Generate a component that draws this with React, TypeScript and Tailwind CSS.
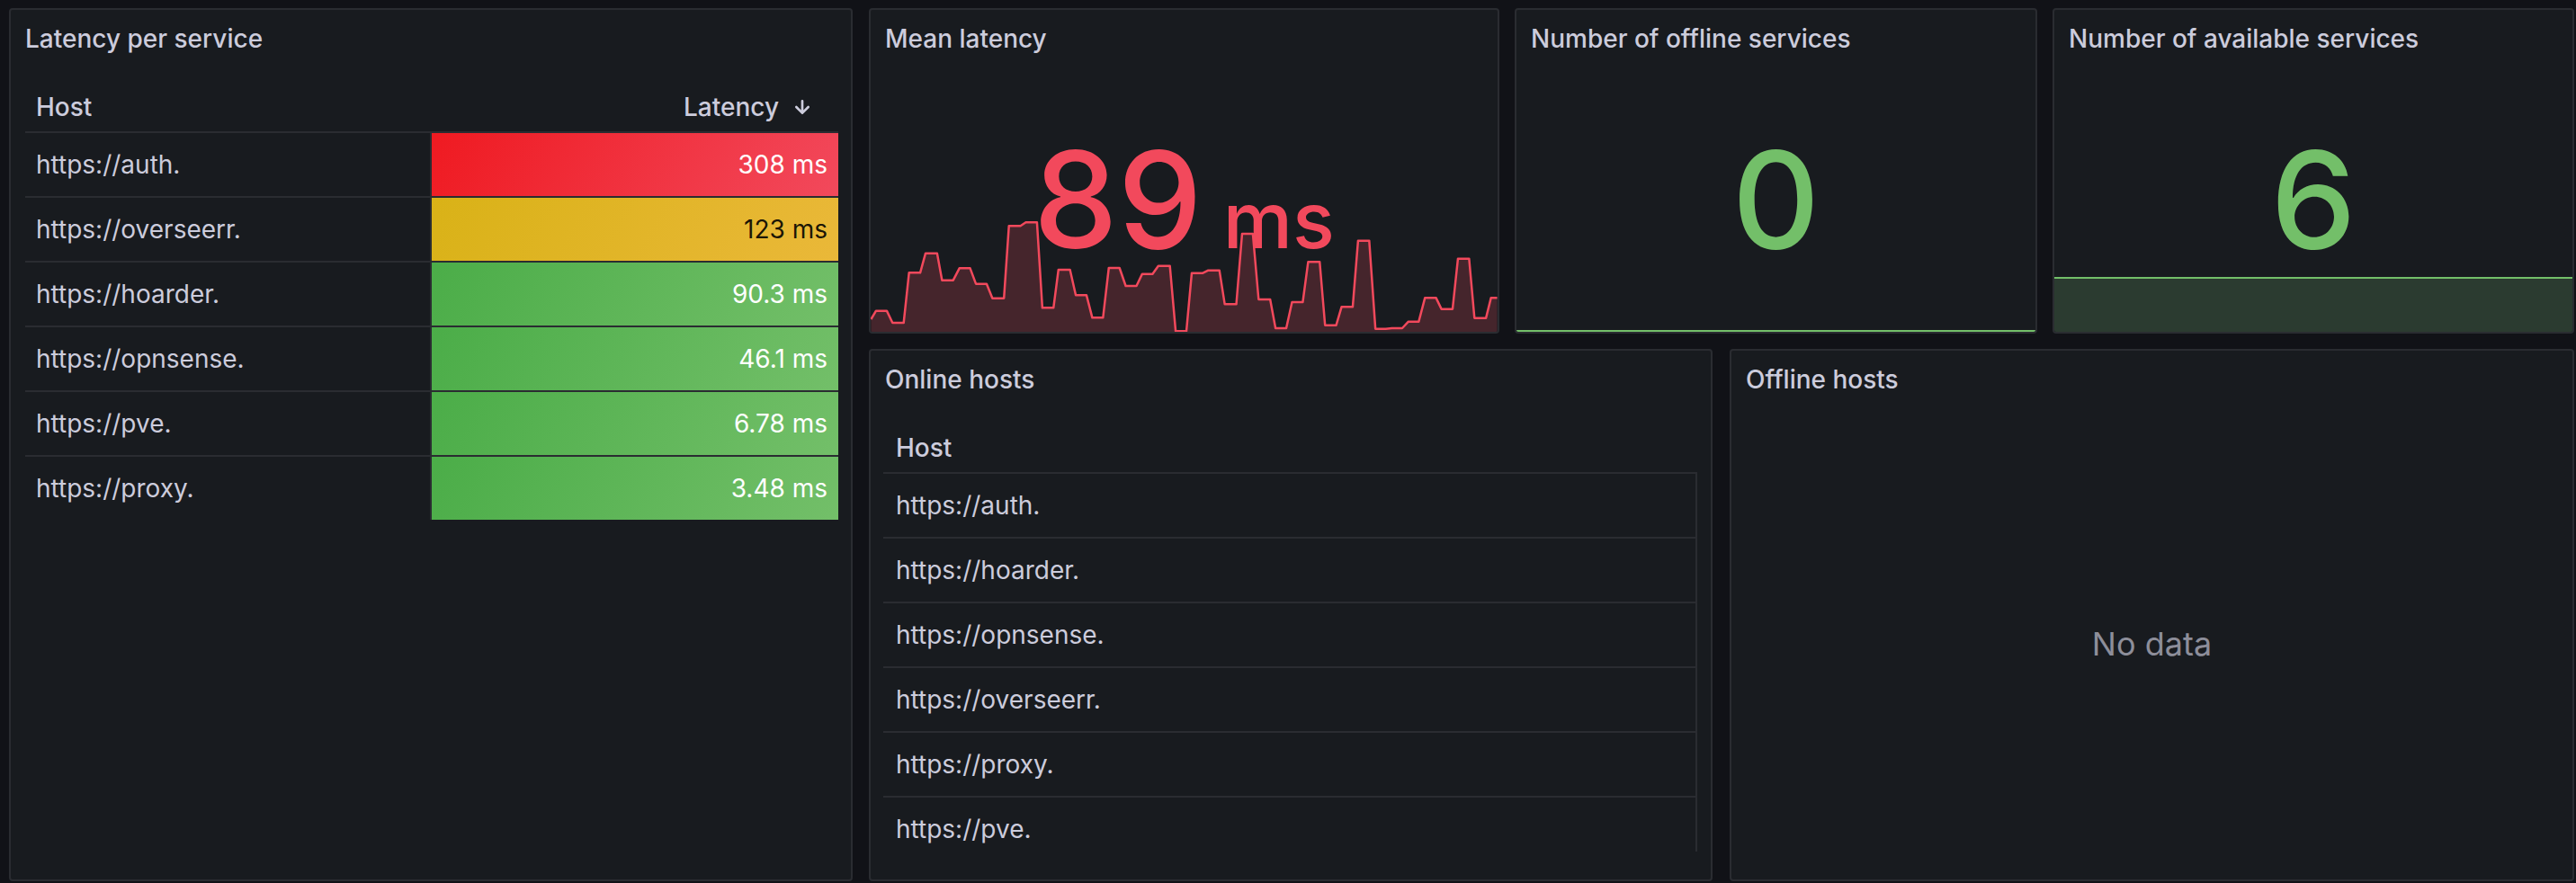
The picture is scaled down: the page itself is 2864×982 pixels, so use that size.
import React from "react";

const latencies = [
  { host: "https://auth.", value: "308 ms", cell: "bg-[linear-gradient(120deg,#ef1a21,#f2495c)] text-white" },
  { host: "https://overseerr.", value: "123 ms", cell: "bg-[linear-gradient(120deg,#d9b217,#eab839)] text-black/90" },
  { host: "https://hoarder.", value: "90.3 ms", cell: "bg-[linear-gradient(120deg,#4bad48,#73bf69)] text-white" },
  { host: "https://opnsense.", value: "46.1 ms", cell: "bg-[linear-gradient(120deg,#4bad48,#73bf69)] text-white" },
  { host: "https://pve.", value: "6.78 ms", cell: "bg-[linear-gradient(120deg,#4bad48,#73bf69)] text-white" },
  { host: "https://proxy.", value: "3.48 ms", cell: "bg-[linear-gradient(120deg,#4bad48,#73bf69)] text-white" },
];

const onlineHosts = [
  "https://auth.",
  "https://hoarder.",
  "https://opnsense.",
  "https://overseerr.",
  "https://proxy.",
  "https://pve.",
];

// mean latency series, traced from the panel (x, y in sparkline units)
const series =
  "18,1068 30,1040 56,1040 70,1080 97,1080 110,913 137,913 150,848 178,848 190,938 217,938 232,898 258,898 272,950 298,950 312,998 340,998 352,757 380,757 393,745 420,745 433,1030 460,1030 472,903 500,903 514,988 540,988 554,1063 580,1063 594,897 620,897 635,957 661,957 675,917 700,917 714,890 742,890 756,1108 782,1108 795,914 822,914 835,905 862,905 875,1018 903,1018 917,783 943,783 957,1002 985,1002 998,1098 1024,1098 1038,1011 1064,1011 1077,877 1105,877 1118,1088 1145,1088 1158,1027 1185,1027 1198,806 1225,806 1240,1100 1265,1100 1280,1098 1305,1098 1320,1076 1345,1076 1360,997 1387,997 1400,1034 1427,1034 1440,866 1467,866 1480,1064 1508,1064 1520,997 1535,997";

function Panel({ title, className = "", children }: { title: string; className?: string; children?: React.ReactNode }) {
  return (
    <div className={`relative flex flex-col overflow-hidden rounded-[4px] border-2 border-[#2a2c31] bg-[#181b1f] ${className}`}>
      <div className="relative z-10 flex h-[64px] shrink-0 items-center pl-[16px] text-[28px] font-medium text-[#ccccdc]">
        {title}
      </div>
      {children}
    </div>
  );
}

function SortDown() {
  return (
    <svg width="32" height="32" viewBox="0 0 24 24" fill="currentColor">
      <path d="M17.71,11.29a1,1,0,0,0-1.42,0L13,14.59V7a1,1,0,0,0-2,0v7.59l-3.29-3.3a1,1,0,0,0-1.420,1.42l5,5a1,1,0,0,0,.33.21.94.94,0,0,0,.76,0,1,1,0,0,0,.33-.21l5-5A1,1,0,0,0,17.71,11.29Z" />
    </svg>
  );
}

export default function App() {
  return (
    <div className="flex h-[982px] w-[2864px] gap-[18px] bg-[#111217] pt-[9px] pr-[2px] pb-[2px] pl-[10px] font-['Inter',sans-serif] text-[#ccccdc]">
      {/* Latency per service */}
      <Panel title="Latency per service" className="w-[938px] shrink-0">
        <div className="flex flex-col pr-[14px] pl-[16px] text-[28px]">
          <div className="flex h-[73px] border-b-2 border-[#2a2c31] pt-[23px] font-medium">
            <div className="flex h-[42px] w-[452px] items-center pl-[12px]">Host</div>
            <div className="flex h-[42px] flex-1 items-center justify-end gap-[10px] pr-[24px]">
              Latency
              <SortDown />
            </div>
          </div>
          {latencies.map((row, i) => (
            <div
              key={row.host}
              className={`flex ${i < latencies.length - 1 ? "h-[72px] border-b-2 border-[#2a2c31]" : "h-[70px]"}`}
            >
              <div className="flex w-[452px] items-center border-r-2 border-[#2a2c31] pl-[12px]">{row.host}</div>
              <div className={`flex flex-1 items-center justify-end pr-[12px] ${row.cell}`}>{row.value}</div>
            </div>
          ))}
        </div>
      </Panel>

      <div className="flex flex-1 flex-col gap-[17px]">
        <div className="flex h-[362px] gap-[17px]">
          {/* Mean latency */}
          <Panel title="Mean latency" className="w-[701px] shrink-0">
            <svg
              className="absolute right-0 bottom-0 left-0 h-[130px] w-full"
              viewBox="17 720 1519 390"
              preserveAspectRatio="none"
            >
              <path d={`M18,1112 L${series.split(" ").join(" L")} L1535,1112 Z`} fill="#45252c" />
              <polyline
                points={series}
                fill="none"
                stroke="#f2495c"
                strokeWidth="2.5"
                strokeLinejoin="round"
                vectorEffect="non-scaling-stroke"
              />
            </svg>
            <div className="relative z-10 flex flex-1 items-center justify-center">
              <span className="text-[149px] leading-none font-medium text-[#f2495c]">
                89<span className="text-[87px]"> ms</span>
              </span>
            </div>
          </Panel>

          {/* Offline count */}
          <Panel title="Number of offline services" className="w-[581px] shrink-0">
            <div className="absolute right-0 bottom-0 left-0 h-[2px] bg-[#73bf69]" />
            <div className="relative z-10 flex flex-1 items-center justify-center">
              <span className="text-[151px] leading-none font-medium text-[#73bf69]">0</span>
            </div>
          </Panel>

          {/* Available count */}
          <Panel title="Number of available services" className="flex-1">
            <div className="absolute right-0 bottom-0 left-0 h-[61px] border-t-2 border-[#73bf69] bg-[#2b3b30]" />
            <div className="relative z-10 flex flex-1 items-center justify-center">
              <span className="text-[151px] leading-none font-medium text-[#73bf69]">6</span>
            </div>
          </Panel>
        </div>

        <div className="flex flex-1 gap-[19px]">
          {/* Online hosts */}
          <Panel title="Online hosts" className="w-[938px] shrink-0">
            <div className="flex flex-col pr-[15px] pl-[14px] text-[28px]">
              <div className="h-[73px] border-b-2 border-[#2a2c31] pt-[23px] font-medium">
                <div className="flex h-[42px] items-center pl-[14px]">Host</div>
              </div>
              <div className="h-[420px] overflow-hidden border-r-2 border-[#2a2c31]">
                {onlineHosts.map((host) => (
                  <div key={host} className="flex h-[72px] items-center border-b-2 border-[#2a2c31] pl-[14px]">
                    {host}
                  </div>
                ))}
              </div>
            </div>
          </Panel>

          {/* Offline hosts */}
          <Panel title="Offline hosts" className="flex-1">
            <div className="flex flex-1 items-center justify-center text-[36px] text-[#8d8e9a]">No data</div>
          </Panel>
        </div>
      </div>
    </div>
  );
}
